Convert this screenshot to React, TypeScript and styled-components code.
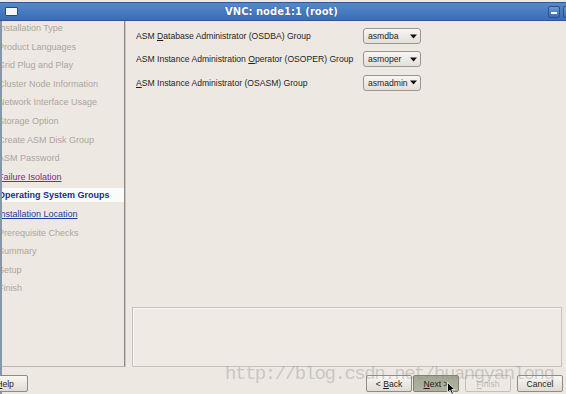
import React from "react";
import styled, { createGlobalStyle } from "styled-components";

const GlobalStyle = createGlobalStyle`
  html, body {
    margin: 0;
    padding: 0;
    background: #eee8e2;
    overflow: hidden;
  }
`;

const Window = styled.div`
  position: relative;
  width: 566px;
  height: 394px;
  display: flex;
  flex-direction: column;
  overflow: hidden;
  background: #eee8e2;
  font-family: "Liberation Sans", Arial, sans-serif;
`;

const TitleBar = styled.div`
  margin-top: 2px;
  display: flex;
  align-items: center;
  background: linear-gradient(#5588cb, #3b6db3);
  border-top: 1px solid #2f5993;
  border-bottom: 1px solid #2e5690;
  box-sizing: border-box;
  height: 19px;
`;

const WinIcon = styled.div`
  width: 11px;
  height: 7px;
  margin-left: 5px;
  background: #f4f6fa;
  border: 1px solid #274b80;
  border-radius: 1px;
`;

const Title = styled.div`
  flex: 1;
  text-align: center;
  color: #ffffff;
  font-family: "DejaVu Sans", sans-serif;
  font-weight: bold;
  font-size: 10px;
  text-shadow: 0 0 1px #1f3f70;
`;

const TitleButton = styled.div`
  width: 12px;
  height: 12px;
  margin-left: 3px;
  border: 1px solid #2b5188;
  border-radius: 2px;
  background: linear-gradient(#6a98d4, #3c6cb2);
  display: flex;
  align-items: flex-end;
  justify-content: center;
  padding-bottom: 3px;
  box-sizing: border-box;
  &:last-child {
    margin-right: -9px;
  }
`;

const Dash = styled.div`
  width: 6px;
  height: 2px;
  background: #ffffff;
`;

const Body = styled.div`
  flex: 1;
  display: flex;
  flex-direction: column;
  border-left: 2px solid #8796aa;
`;

const Content = styled.div`
  display: flex;
  height: 346px;
`;

const Sidebar = styled.div`
  width: 122px;
  border-right: 1px solid #8c8985;
  box-shadow: 1px 0 0 #cbc7c1;
  border-bottom: 1px solid #b9b5af;
  overflow: hidden;
  margin-right: 1px;
`;

const Step = styled.div<{ $kind: "off" | "visited" | "current" | "link" }>`
  height: 14px;
  margin-bottom: 4.6px;
  display: flex;
  align-items: center;
  white-space: nowrap;
  font-size: 9px;
  background: ${(p) => (p.$kind === "current" ? "#fafcfb" : "transparent")};
  color: ${(p) =>
    p.$kind === "off"
      ? "#aaa6a1"
      : p.$kind === "visited"
      ? "#7c2a8c"
      : p.$kind === "current"
      ? "#1c2d86"
      : "#233c9c"};
  font-weight: ${(p) => (p.$kind === "current" ? "bold" : "normal")};
  text-decoration: ${(p) =>
    p.$kind === "visited" || p.$kind === "link" ? "underline" : "none"};
  span {
    margin-left: -4px;
  }
`;

const Main = styled.div`
  flex: 1;
  display: flex;
  flex-direction: column;
  padding: 7px 4px 0 6px;
`;

const Form = styled.div`
  display: grid;
  grid-template-columns: 227px 58px;
  grid-auto-rows: 16px;
  row-gap: 7.4px;
  padding-left: 4px;
  flex: 1;
  align-content: start;
`;

const Label = styled.div`
  display: flex;
  align-items: center;
  font-size: 8.6px;
  color: #1e1e1e;
  white-space: nowrap;
  u {
    text-decoration: underline;
  }
`;

const Select = styled.div`
  display: flex;
  align-items: center;
  justify-content: space-between;
  padding: 0 3px 0 4px;
  box-sizing: border-box;
  border: 1px solid #9a968f;
  border-radius: 3px;
  background: linear-gradient(#f8f6f3, #e3dfd8);
  font-size: 8.6px;
  color: #1e1e1e;
`;

const MessageBox = styled.div`
  height: 60px;
  box-sizing: border-box;
  border: 1px solid #c6c2bb;
  background: #f0eae4;
  box-shadow: inset 1px 1px 0 #faf8f5;
`;

const ButtonBar = styled.div`
  height: 27px;
  display: flex;
  align-items: flex-start;
  padding: 8px 3px 0 0;
  box-sizing: border-box;
`;

const Spacer = styled.div`
  flex: 1;
`;

const Button = styled.div<{ $state?: "pressed" | "disabled" }>`
  width: 46px;
  height: 17px;
  box-sizing: border-box;
  display: flex;
  align-items: center;
  justify-content: center;
  border-radius: 2px;
  font-size: 8.6px;
  border: 1px solid
    ${(p) => (p.$state === "disabled" ? "#c4c0ba" : p.$state === "pressed" ? "#7f836f" : "#8f8b85")};
  background: ${(p) =>
    p.$state === "pressed"
      ? "linear-gradient(#a3a792, #b0b39f)"
      : p.$state === "disabled"
      ? "#efe9e3"
      : "linear-gradient(#f9f7f4, #dfdbd4)"};
  color: ${(p) => (p.$state === "disabled" ? "#bdb9b3" : "#1e1e1e")};
  margin-left: 6px;
  u {
    text-decoration: underline;
  }
`;

const HelpButton = styled(Button)`
  margin-left: -20px;
`;

const BackButton = styled(Button)`
  margin-right: -5px;
`;

const Watermark = styled.div`
  position: absolute;
  left: 225px;
  top: 363px;
  font-family: "Liberation Mono", "Courier New", monospace;
  font-size: 19px;
  letter-spacing: -1.45px;
  color: rgba(140, 140, 140, 0.38);
  white-space: nowrap;
  pointer-events: none;
`;

const Cursor = styled.svg`
  position: absolute;
  left: 447px;
  top: 382px;
`;

const steps: { text: string; kind: "off" | "visited" | "current" | "link" }[] = [
  { text: "Installation Type", kind: "off" },
  { text: "Product Languages", kind: "off" },
  { text: "Grid Plug and Play", kind: "off" },
  { text: "Cluster Node Information", kind: "off" },
  { text: "Network Interface Usage", kind: "off" },
  { text: "Storage Option", kind: "off" },
  { text: "Create ASM Disk Group", kind: "off" },
  { text: "ASM Password", kind: "off" },
  { text: "Failure Isolation", kind: "visited" },
  { text: "Operating System Groups", kind: "current" },
  { text: "Installation Location", kind: "link" },
  { text: "Prerequisite Checks", kind: "off" },
  { text: "Summary", kind: "off" },
  { text: "Setup", kind: "off" },
  { text: "Finish", kind: "off" },
];

function Arrow() {
  return (
    <svg width="7" height="5" viewBox="0 0 7 5">
      <path d="M0 0.5 H7 L3.5 4.5 Z" fill="#111" />
    </svg>
  );
}

export default function App() {
  return (
    <Window>
      <GlobalStyle />
      <TitleBar>
        <WinIcon />
        <Title>VNC: node1:1 (root)</Title>
        <TitleButton>
          <Dash />
        </TitleButton>
        <TitleButton />
      </TitleBar>
      <Body>
        <Content>
          <Sidebar>
            {steps.map((s) => (
              <Step key={s.text} $kind={s.kind}>
                <span>{s.text}</span>
              </Step>
            ))}
          </Sidebar>
          <Main>
            <Form>
              <Label>
                <span>
                  ASM <u>D</u>atabase Administrator (OSDBA) Group
                </span>
              </Label>
              <Select>
                asmdba <Arrow />
              </Select>
              <Label>
                <span>
                  ASM Instance Administration <u>O</u>perator (OSOPER) Group
                </span>
              </Label>
              <Select>
                asmoper <Arrow />
              </Select>
              <Label>
                <span>
                  <u>A</u>SM Instance Administrator (OSASM) Group
                </span>
              </Label>
              <Select>
                asmadmin <Arrow />
              </Select>
            </Form>
            <MessageBox />
          </Main>
        </Content>
        <ButtonBar>
          <HelpButton>
            <span>
              <u>H</u>elp
            </span>
          </HelpButton>
          <Spacer />
          <BackButton>
            <span>
              &lt; <u>B</u>ack
            </span>
          </BackButton>
          <Button $state="pressed">
            <span>
              <u>N</u>ext &gt;
            </span>
          </Button>
          <Button $state="disabled">
            <span>
              <u>F</u>inish
            </span>
          </Button>
          <Button>Cancel</Button>
        </ButtonBar>
      </Body>
      <Watermark>http://blog.csdn.net/huangyanlong</Watermark>
      <Cursor width="9" height="13" viewBox="0 0 9 13">
        <path d="M0.5 0.5 L0.5 10.5 L3 8.2 L4.8 12.3 L6.4 11.6 L4.7 7.6 L8 7.6 Z" fill="#000" stroke="#fff" strokeWidth="0.8" />
      </Cursor>
    </Window>
  );
}
